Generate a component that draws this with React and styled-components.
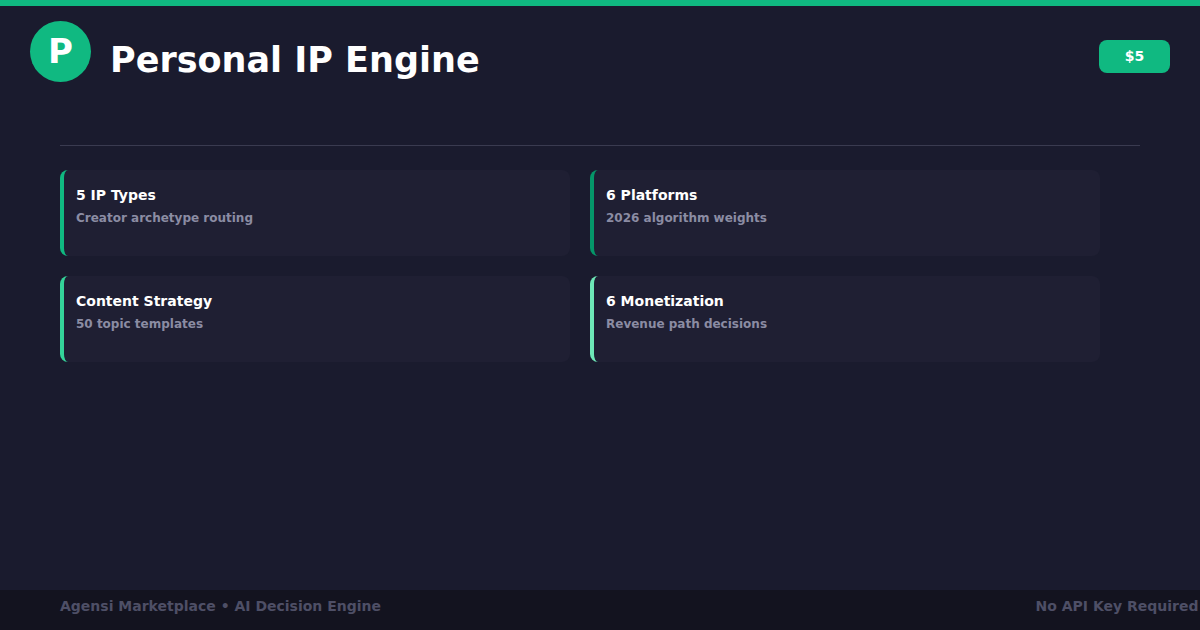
import React from 'react';
import styled, { createGlobalStyle } from 'styled-components';

const Global = createGlobalStyle`
  html, body { margin: 0; padding: 0; background: #1a1b2e; overflow: hidden; }
  * { box-sizing: border-box; }
`;

const Page = styled.div`
  width: 1200px;
  height: 630px;
  display: flex;
  flex-direction: column;
  background: #1a1b2e;
  border-top: 6px solid #10b981;
  font-family: "DejaVu Sans", sans-serif;
  font-weight: bold;
  overflow: hidden;
`;

const Header = styled.header`
  display: flex;
  align-items: center;
  padding: 14px 30px 0;
  height: 76px;
`;

const Logo = styled.div`
  width: 61px;
  height: 61px;
  border-radius: 50%;
  background: #10b981;
  color: #fff;
  font-size: 34px;
  display: flex;
  align-items: center;
  justify-content: center;
`;

const Title = styled.h1`
  margin: 18px 0 0 19px;
  color: #fff;
  font-size: 35px;
  flex: 1;
`;

const Price = styled.div`
  width: 71px;
  height: 33px;
  border-radius: 8px;
  background: #10b981;
  color: #fff;
  font-size: 14px;
  display: flex;
  align-items: center;
  justify-content: center;
  margin-top: 10px;
`;

const Main = styled.main`
  flex: 1;
  padding: 0 60px;
`;

const Divider = styled.hr`
  margin: 63px 0 24px;
  border: 0;
  border-top: 1px solid #3a3b50;
`;

const Grid = styled.div`
  display: grid;
  grid-template-columns: 510px 510px;
  gap: 20px;
`;

const Card = styled.div`
  height: 86px;
  background: #1f1f33;
  border-radius: 8px;
  border-left: 4px solid ${p => p.$accent};
  padding: 17px 12px;
`;

const CardTitle = styled.div`
  color: #fff;
  font-size: 14px;
  margin-bottom: 8px;
`;

const CardSub = styled.div`
  color: #8b8ca3;
  font-size: 12px;
`;

const Footer = styled.footer`
  height: 40px;
  background: #13131f;
  display: flex;
  align-items: center;
  padding: 0 60px 8px;
  font-size: 14px;
  color: #4e4f66;
  white-space: nowrap;
`;

const FooterRight = styled.span`
  margin-left: auto;
  margin-right: -183px;
`;

const cards = [
  { title: '5 IP Types', sub: 'Creator archetype routing', accent: '#10b981' },
  { title: '6 Platforms', sub: '2026 algorithm weights', accent: '#059669' },
  { title: 'Content Strategy', sub: '50 topic templates', accent: '#34d399' },
  { title: '6 Monetization', sub: 'Revenue path decisions', accent: '#6ee7b7' },
];

export default function App() {
  return (
    <>
      <Global />
      <Page>
        <Header>
          <Logo>P</Logo>
          <Title>Personal IP Engine</Title>
          <Price>$5</Price>
        </Header>
        <Main>
          <Divider />
          <Grid>
            {cards.map(c => (
              <Card key={c.title} $accent={c.accent}>
                <CardTitle>{c.title}</CardTitle>
                <CardSub>{c.sub}</CardSub>
              </Card>
            ))}
          </Grid>
        </Main>
        <Footer>
          <span>Agensi Marketplace • AI Decision Engine</span>
          <FooterRight>No API Key Required • Works Offline</FooterRight>
        </Footer>
      </Page>
    </>
  );
}
